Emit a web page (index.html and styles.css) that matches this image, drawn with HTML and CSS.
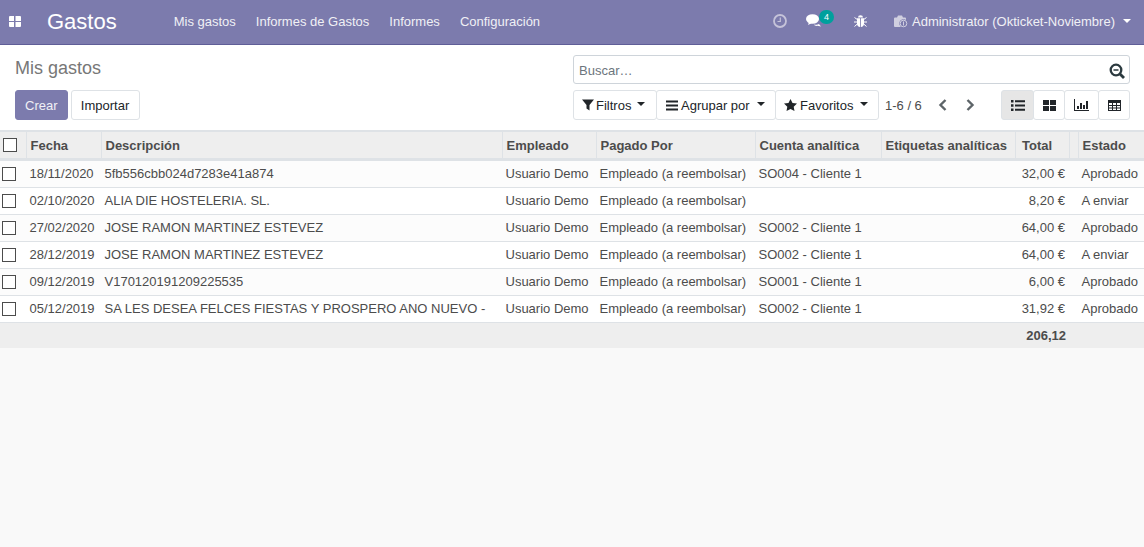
FILE: index.html
```html
<!DOCTYPE html>
<html lang="es">
<head>
    <meta charset="UTF-8">
    <meta name="viewport" content="width=device-width, initial-scale=1.0">
    <title>Gastos</title>
    <link rel="stylesheet" href="styles.css">
</head>
<body>

<header class="navbar">
    <a class="apps-icon" href="#">
        <svg width="12" height="11" viewBox="0 0 12 11"><path fill="#fff" d="M0 1a1 1 0 0 1 1-1h4v5H0zM6.500 0H11a1 1 0 0 1 1 1v4H6.500zM0 6h5v5H1a1 1 0 0 1-1-1zM6.500 6H12v4a1 1 0 0 1-1 1H6.500z"/></svg>
    </a>
    <span class="brand">Gastos</span>
    <nav class="menu">
        <a href="#">Mis gastos</a>
        <a href="#">Informes de Gastos</a>
        <a href="#">Informes</a>
        <a href="#">Configuración</a>
    </nav>
    <div class="systray">
        <svg class="tray-clock" width="14" height="14" viewBox="0 0 14 14"><circle cx="7" cy="7" r="6" fill="none" stroke="#c5c3d9" stroke-width="1.800"/><path d="M7.300 3.500V7.500H4.500" fill="none" stroke="#c5c3d9" stroke-width="1.200"/></svg>
        <span class="tray-chat">
            <svg width="16" height="14" viewBox="0 0 16 14"><ellipse cx="6.500" cy="5" rx="6.500" ry="4.800" fill="#fff"/><path d="M3 8l-1 3 4-2zM8 10.500c2 .5 4 .3 5-.5l2 2.500-3.500-.7c-1.500.4-2.800 0-3.500-1.300z" fill="#fff"/></svg>
            <span class="badge">4</span>
        </span>
        <svg class="tray-bug" width="13" height="13" viewBox="0 0 13 13"><path fill="#fff" d="M4 2.500a2.500 2.200 0 0 1 5 0zM3 3.300h3.100V12C4.300 11.800 3 10.500 3 9zM6.900 3.300H10V9c0 1.500-1.300 2.800-3.100 3z"/><path stroke="#fff" fill="none" d="M.500 2.500l2.800 2M12.500 2.500l-2.800 2M0 7h3.300M13 7H9.700M.500 11.500l2.800-2.500M12.500 11.500l-2.800-2.500"/></svg>
        <span class="user">
            <svg width="14" height="13" viewBox="0 0 14 13"><path fill="#d0cfe0" d="M0 3.500a1 1 0 0 1 1-1h2L4 .500h4l1 2h2a1 1 0 0 1 1 1V11a1 1 0 0 1-1 1H1a1 1 0 0 1-1-1z"/><circle cx="9.500" cy="8.500" r="4.200" fill="#7c7bad"/><circle cx="9.500" cy="8.500" r="3.300" fill="none" stroke="#d0cfe0"/><path d="M9.500 6.500v4" stroke="#d0cfe0"/></svg>
            Administrator (Okticket-Noviembre)
            <span class="caret"></span>
        </span>
    </div>
</header>

<section class="control-panel">
    <div class="cp-left">
        <h1 class="breadcrumb">Mis gastos</h1>
        <div class="cp-buttons">
            <button class="btn btn-primary">Crear</button>
            <button class="btn btn-import">Importar</button>
        </div>
    </div>
    <div class="cp-right">
        <div class="search">
            <span class="search-text">Buscar…</span>
            <svg width="16" height="16" viewBox="0 0 16 16"><circle cx="7" cy="7" r="5.300" fill="none" stroke="#2b3a3f" stroke-width="2.300"/><path d="M11 11l4 4" stroke="#2b3a3f" stroke-width="2.800"/><path d="M4.500 7h5" stroke="#2b3a3f" stroke-width="1.500"/></svg>
        </div>
        <div class="cp-tools">
            <div class="btn-group">
                <button class="btn tool-filtros">
                    <svg width="12" height="12" viewBox="0 0 12 12"><path fill="#212529" d="M0 .500h12L7.500 6v5.500L4.500 9.500V6z"/></svg>
                    Filtros <span class="caret dark"></span>
                </button>
                <button class="btn tool-agrupar">
                    <svg width="12" height="11" viewBox="0 0 12 11"><path fill="#212529" d="M0 .500h12v2H0zM0 4.500h12v2H0zM0 8.500h12v2H0z"/></svg>
                    Agrupar por <span class="caret dark"></span>
                </button>
                <button class="btn tool-favoritos">
                    <svg width="13" height="12" viewBox="0 0 13 12"><path fill="#212529" d="M6.500 0l2 4 4.500.6-3.300 3.100.8 4.300-4-2.100-4 2.100.8-4.300L0 4.600 4.500 4z"/></svg>
                    Favoritos <span class="caret dark"></span>
                </button>
            </div>
            <span class="pager">1-6 / 6</span>
            <span class="pager-arrows">
                <svg width="10" height="12" viewBox="0 0 10 12"><path d="M7.500 1L2.500 6l5 5" fill="none" stroke="#5d6468" stroke-width="2.400"/></svg>
                <svg width="10" height="12" viewBox="0 0 10 12"><path d="M2.500 1l5 5-5 5" fill="none" stroke="#5d6468" stroke-width="2.400"/></svg>
            </span>
            <div class="btn-group views">
                <button class="btn view view-list active">
                    <svg width="14" height="11" viewBox="0 0 14 11"><path fill="#212529" d="M0 0h2.500v2.500H0zM4 .300h10v2H4zM0 4.200h2.500v2.500H0zM4 4.500h10v2H4zM0 8.400h2.500v2.500H0zM4 8.700h10v2H4z"/></svg>
                </button>
                <button class="btn view">
                    <svg width="13" height="11" viewBox="0 0 13 11"><path fill="#212529" d="M0 0h6v5H0zM7 0h6v5H7zM0 6h6v5H0zM7 6h6v5H7z"/></svg>
                </button>
                <button class="btn view view-graph">
                    <svg width="15" height="12" viewBox="0 0 15 12"><path fill="#212529" d="M0 0h1v11h14v1H0zM3 7h2v3H3zM6 4h2v6H6zM9 6h2v4H9zM12 2h2v8h-2z"/></svg>
                </button>
                <button class="btn view">
                    <svg width="13" height="11" viewBox="0 0 13 11"><path fill="#212529" fill-rule="evenodd" d="M0 0h13v11H0zM1 3v2h3V3zM5 3v2h3V3zM9 3v2h3V3zM1 6v1.500h3V6zM5 6v1.500h3V6zM9 6v1.500h3V6zM1 8.500V10h3V8.500zM5 8.500V10h3V8.500zM9 8.500V10h3V8.500z"/></svg>
                </button>
            </div>
        </div>
    </div>
</section>

<table class="list">
    <colgroup>
        <col class="c-check"><col class="c-fecha"><col class="c-desc"><col class="c-emp"><col class="c-pago">
        <col class="c-cuenta"><col class="c-etiq"><col class="c-total"><col class="c-gap"><col class="c-estado">
    </colgroup>
    <thead>
        <tr>
            <th><span class="check"></span></th>
            <th>Fecha</th>
            <th>Descripción</th>
            <th>Empleado</th>
            <th>Pagado Por</th>
            <th>Cuenta analítica</th>
            <th>Etiquetas analíticas</th>
            <th class="th-total">Total</th>
            <th></th>
            <th>Estado</th>
        </tr>
    </thead>
    <tbody>
        <tr>
            <td><span class="check"></span></td>
            <td>18/11/2020</td>
            <td>5fb556cbb024d7283e41a874</td>
            <td>Usuario Demo</td>
            <td>Empleado (a reembolsar)</td>
            <td>SO004 - Cliente 1</td>
            <td></td>
            <td class="amount">32,00 €</td>
            <td></td>
            <td>Aprobado</td>
        </tr>
        <tr>
            <td><span class="check"></span></td>
            <td>02/10/2020</td>
            <td>ALIA DIE HOSTELERIA. SL.</td>
            <td>Usuario Demo</td>
            <td>Empleado (a reembolsar)</td>
            <td></td>
            <td></td>
            <td class="amount">8,20 €</td>
            <td></td>
            <td>A enviar</td>
        </tr>
        <tr>
            <td><span class="check"></span></td>
            <td>27/02/2020</td>
            <td>JOSE RAMON MARTINEZ ESTEVEZ</td>
            <td>Usuario Demo</td>
            <td>Empleado (a reembolsar)</td>
            <td>SO002 - Cliente 1</td>
            <td></td>
            <td class="amount">64,00 €</td>
            <td></td>
            <td>Aprobado</td>
        </tr>
        <tr>
            <td><span class="check"></span></td>
            <td>28/12/2019</td>
            <td>JOSE RAMON MARTINEZ ESTEVEZ</td>
            <td>Usuario Demo</td>
            <td>Empleado (a reembolsar)</td>
            <td>SO002 - Cliente 1</td>
            <td></td>
            <td class="amount">64,00 €</td>
            <td></td>
            <td>A enviar</td>
        </tr>
        <tr>
            <td><span class="check"></span></td>
            <td>09/12/2019</td>
            <td>V170120191209225535</td>
            <td>Usuario Demo</td>
            <td>Empleado (a reembolsar)</td>
            <td>SO001 - Cliente 1</td>
            <td></td>
            <td class="amount">6,00 €</td>
            <td></td>
            <td>Aprobado</td>
        </tr>
        <tr>
            <td><span class="check"></span></td>
            <td>05/12/2019</td>
            <td>SA LES DESEA FELCES FIESTAS Y PROSPERO ANO NUEVO -</td>
            <td>Usuario Demo</td>
            <td>Empleado (a reembolsar)</td>
            <td>SO002 - Cliente 1</td>
            <td></td>
            <td class="amount">31,92 €</td>
            <td></td>
            <td>Aprobado</td>
        </tr>
    </tbody>
    <tfoot>
        <tr>
            <td colspan="7"></td>
            <td class="amount sum">206,12</td>
            <td colspan="2"></td>
        </tr>
    </tfoot>
</table>

</body>
</html>
```

FILE: styles.css
```css
* {
    box-sizing: border-box;
}
html, body {
    height: 100%;
}
body {
    margin: 0;
    overflow: hidden;
    font-family: "Liberation Sans", Arial, sans-serif;
    font-size: 13px;
    color: #4c4c4c;
    background: #f9f9f9;
}
a {
    color: inherit;
    text-decoration: none;
}

/* top bar */
.navbar {
    display: flex;
    align-items: center;
    height: 45px;
    padding-bottom: 2px;
    background: #7c7bad;
    border-bottom: 1px solid #5f5e97;
    color: #fff;
}
.apps-icon {
    display: flex;
    margin-left: 9px;
}
.brand {
    margin-left: 26px;
    margin-top: 2px;
    font-size: 22px;
    line-height: 1;
}
.menu {
    display: flex;
    gap: 20px;
    margin-left: 57px;
    color: #f0f0f5;
}
.systray {
    display: flex;
    align-items: center;
    margin-left: auto;
    color: #f0f0f5;
}
.tray-chat {
    position: relative;
    display: flex;
    margin-left: 19px;
}
.tray-bug {
    margin-left: 32px;
}
.badge {
    position: absolute;
    top: -4px;
    left: 13px;
    width: 15px;
    height: 14px;
    border-radius: 7px;
    background: #00a09d;
    color: #fff;
    font-size: 9px;
    line-height: 14px;
    text-align: center;
}
.user {
    display: flex;
    align-items: center;
    gap: 4px;
    margin-left: 27px;
    margin-right: 13px;
}
.caret {
    display: inline-block;
    width: 0;
    height: 0;
    margin-left: 4px;
    border-top: 4px solid #fff;
    border-left: 4px solid transparent;
    border-right: 4px solid transparent;
}
.caret.dark {
    margin-left: 4px;
    margin-bottom: 3px;
    border-top-color: #212529;
}

/* control panel */
.control-panel {
    display: flex;
    justify-content: space-between;
    height: 85px;
    padding: 10px 14px 0 15px;
    background: #fff;
}
.breadcrumb {
    margin: 0;
    height: 26px;
    font-size: 18px;
    font-weight: normal;
    line-height: 26px;
    color: #777;
}
.cp-buttons {
    display: flex;
    gap: 3px;
    margin-top: 9px;
}
.btn {
    height: 30px;
    padding: 0 9px;
    border: 1px solid #dee2e6;
    border-radius: 3px;
    background: #fff;
    color: #212529;
    font-family: inherit;
    font-size: 13px;
}
.btn-primary {
    background: #7c7bad;
    border-color: #7c7bad;
    color: #f0f0f5;
}
.btn-import {
    width: 69px;
    padding: 0;
}
.cp-right {
    width: 557px;
}
.search {
    display: flex;
    align-items: center;
    justify-content: space-between;
    height: 29px;
    padding: 2px 4px 0 5px;
    border: 1px solid #ced4da;
    border-radius: 3px;
    color: #6c757d;
}
.cp-tools {
    display: flex;
    align-items: center;
    margin-top: 6px;
}
.btn-group {
    display: flex;
}
.btn-group .btn {
    display: flex;
    align-items: center;
    gap: 3px;
    margin-right: -1px;
}
.btn-group .tool-filtros {
    width: 84px;
    padding: 0 8px;
    gap: 2px;
}
.tool-agrupar {
    width: 120px;
    padding: 0 9px;
}
.tool-favoritos {
    width: 104px;
    padding: 0 8px;
}
.pager {
    margin-left: 7px;
    color: #4c4c4c;
}
.pager-arrows {
    display: flex;
    gap: 17px;
    margin-left: 16px;
}
.views {
    margin-left: auto;
}
.btn-group .view {
    width: 32px;
    padding: 0;
    justify-content: center;
}
.btn-group .view-list {
    width: 33px;
}
.btn-group .view-graph {
    width: 35px;
}
.btn-group .view:last-child {
    margin-right: 0;
}
.btn-group .view.active {
    background: #e6e6e6;
}

/* list */
.list {
    width: 1144px;
    table-layout: fixed;
    border-collapse: separate;
    border-spacing: 0;
    background: #fff;
}
.c-check { width: 26px; }
.c-fecha { width: 75px; }
.c-desc { width: 401px; }
.c-emp { width: 94px; }
.c-pago { width: 159px; }
.c-cuenta { width: 126px; }
.c-etiq { width: 134px; }
.c-total { width: 54px; }
.c-gap { width: 9px; }
.c-estado { width: 66px; }

.list th {
    height: 31px;
    padding: 0 3px 0 3.5px;
    background: #eee;
    border-top: 2px solid #dee2e6;
    border-bottom: 3px solid #dee2e6;
    border-left: 1px solid #dee2e6;
    color: #4c4c4c;
    font-weight: bold;
    text-align: left;
    white-space: nowrap;
}
.list th:first-child {
    border-left: 0;
    padding-left: 4px;
}
.list .th-total {
    padding-left: 6px;
}
.list td {
    height: 27px;
    padding: 0 3px 2px 3.5px;
    border-bottom: 1px solid #dee2e6;
    white-space: nowrap;
}
.list td:first-child {
    padding: 0 0 0 3px;
}
.list tbody tr:nth-child(odd) {
    background: #fcfcfc;
}
.list tbody .amount {
    padding-right: 4px;
}
.list .amount {
    text-align: right;
}
.list tfoot td {
    height: 25px;
    padding-bottom: 0;
    background: #eee;
    border-bottom: 0;
}
.sum {
    font-weight: bold;
}
.check {
    display: block;
    width: 14px;
    height: 14px;
    margin-left: -1px;
    border: 1px solid #4c4c4c;
    background: #fff;
}
```
